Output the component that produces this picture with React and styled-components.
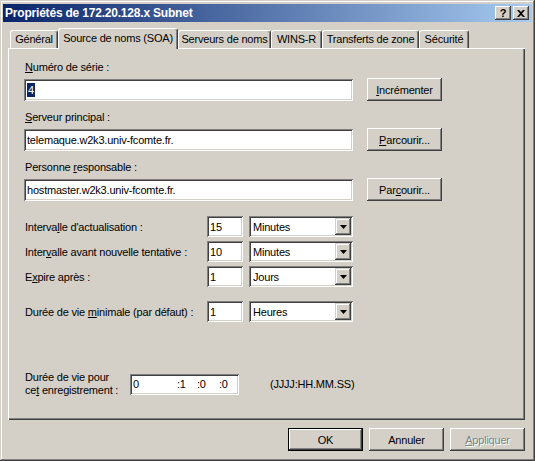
import React from 'react'
import styled, { createGlobalStyle } from 'styled-components'

const face = '#D4D0C8'
const shadow = '#808080'
const dark = '#404040'

const GlobalStyle = createGlobalStyle`
  html, body {
    margin: 0;
    padding: 0;
    background: ${face};
  }
  body {
    font-family: "Liberation Sans", Arial, sans-serif;
    font-size: 11px;
    letter-spacing: -0.2px;
    color: #000;
  }
`

const Window = styled.div`
  width: 535px;
  height: 461px;
  box-sizing: border-box;
  padding: 4px 3px 4px 3px;
  background: ${face};
  box-shadow: inset -1px -1px ${dark}, inset 1px 1px ${face},
    inset -2px -2px ${shadow}, inset 2px 2px #fff;
  display: flex;
  flex-direction: column;
`

const TitleBar = styled.div`
  height: 18px;
  display: flex;
  align-items: center;
  padding: 0 3px 0 2px;
  background: linear-gradient(to right, #0A246A, #A6CAF0);
`

const TitleText = styled.div`
  flex: 1;
  color: #fff;
  font-weight: bold;
  font-size: 12px;
  letter-spacing: -0.2px;
  white-space: nowrap;
`

const CaptionButtons = styled.div`
  display: flex;
  gap: 2px;
`

const CaptionButton = styled.div`
  width: 16px;
  height: 14px;
  box-sizing: border-box;
  background: ${face};
  box-shadow: inset -1px -1px ${dark}, inset 1px 1px #fff,
    inset -2px -2px ${shadow}, inset 2px 2px ${face};
  display: flex;
  align-items: center;
  justify-content: center;
  font-weight: bold;
  font-size: 11px;
  line-height: 14px;
  letter-spacing: 0;
`

const Body = styled.div`
  padding: 6px 7px 0 5px;
  display: flex;
  flex-direction: column;
`

const TabStrip = styled.div`
  height: 20px;
  display: flex;
  align-items: flex-end;
  padding-left: 2px;
`

const Tab = styled.div`
  width: ${p => p.$w}px;
  height: ${p => (p.$active ? 21 : 18)}px;
  margin-bottom: ${p => (p.$active ? -1 : 0)}px;
  box-sizing: border-box;
  position: ${p => (p.$active ? 'relative' : 'static')};
  z-index: ${p => (p.$active ? 1 : 0)};
  background: ${face};
  border: 1px solid;
  border-color: #fff ${dark} transparent #fff;
  border-bottom: none;
  border-radius: 3px 3px 0 0;
  box-shadow: inset -1px 0 ${shadow};
  display: flex;
  justify-content: center;
  padding-top: ${p => (p.$active ? 3 : 2)}px;
  line-height: 13px;
  white-space: nowrap;
`

const Panel = styled.div`
  height: 372px;
  box-sizing: border-box;
  padding: 13px 0 0 16px;
  box-shadow: inset 1px 1px #fff, inset -1px -1px ${dark}, inset -2px -2px ${shadow};
  display: flex;
  flex-direction: column;
`

const FieldGroup = styled.div`
  display: flex;
  flex-direction: column;
  margin-top: ${p => p.$top || 0}px;
`

const FieldLabel = styled.div`
  line-height: 13px;
  padding-left: 1px;
  margin-bottom: 4px;
`

const FieldRow = styled.div`
  display: flex;
  align-items: center;
  gap: 14px;
`

const sunken = `
  box-shadow: inset 1px 1px ${shadow}, inset -1px -1px #fff,
    inset 2px 2px ${dark}, inset -2px -2px ${face};
`

const TextBox = styled.div`
  width: ${p => p.$w}px;
  height: ${p => p.$h || 22}px;
  box-sizing: border-box;
  background: #fff;
  ${sunken}
  display: flex;
  align-items: center;
  padding-left: 3px;
  white-space: nowrap;
`

const Selected = styled.span`
  background: #0A246A;
  color: #fff;
  padding: 0 1px;
  line-height: 14px;
`

const PushButton = styled.div`
  width: 75px;
  height: 23px;
  box-sizing: border-box;
  background: ${face};
  box-shadow: inset -1px -1px ${dark}, inset 1px 1px #fff,
    inset -2px -2px ${shadow}, inset 2px 2px ${face};
  display: flex;
  align-items: center;
  justify-content: center;
  white-space: nowrap;
`

const Key = styled.span`
  text-decoration: underline;
  text-underline-offset: 1px;
`

const IntervalList = styled.div`
  display: flex;
  flex-direction: column;
  gap: 4px;
  margin-top: 15px;
`

const IntervalRow = styled.div`
  display: flex;
  align-items: center;
  margin-top: ${p => p.$top || 0}px;
`

const RowLabel = styled.div`
  width: 183px;
  padding-left: 1px;
  box-sizing: border-box;
  white-space: nowrap;
`

const Combo = styled.div`
  width: 104px;
  height: 21px;
  margin-left: 6px;
  box-sizing: border-box;
  background: #fff;
  ${sunken}
  display: flex;
  align-items: center;
  padding: 0 2px 0 4px;
`

const ComboText = styled.div`
  flex: 1;
`

const ComboArrow = styled.div`
  width: 16px;
  height: 17px;
  box-sizing: border-box;
  background: ${face};
  box-shadow: inset -1px -1px ${dark}, inset 1px 1px ${face},
    inset -2px -2px ${shadow}, inset 2px 2px #fff;
  display: flex;
  align-items: center;
  justify-content: center;
`

const TtlRow = styled.div`
  display: flex;
  align-items: center;
  margin-top: 49px;
`

const TtlLabel = styled.div`
  width: 106px;
  line-height: 13px;
  padding-left: 1px;
  box-sizing: border-box;
`

const TimeBox = styled.div`
  width: 109px;
  height: 21px;
  box-sizing: border-box;
  background: #fff;
  ${sunken}
  position: relative;
`

const TimePart = styled.span`
  position: absolute;
  top: 4px;
  line-height: 13px;
`

const FormatHint = styled.div`
  margin-left: 31px;
`

const ButtonBar = styled.div`
  display: flex;
  justify-content: flex-end;
  gap: 6px;
  margin-top: 8px;
  padding-right: 0;
`

const DialogButton = styled(PushButton)`
  ${p => p.$default && `
    border: 1px solid #000;
    box-shadow: inset -1px -1px ${dark}, inset 1px 1px #fff,
      inset -2px -2px ${shadow}, inset 2px 2px ${face};
  `}
  ${p => p.$disabled && `
    color: ${shadow};
    text-shadow: 1px 1px #fff;
  `}
`

const tabs = [
  { label: 'Général', w: 48 },
  { label: 'Source de noms (SOA)', w: 120, active: true },
  { label: 'Serveurs de noms', w: 93 },
  { label: 'WINS-R', w: 51 },
  { label: 'Transferts de zone', w: 97 },
  { label: 'Sécurité', w: 50 },
]

const Arrow = () => (
  <svg width="7" height="4" viewBox="0 0 7 4">
    <path d="M0 0h7L3.5 4z" fill="#000" />
  </svg>
)

const CloseGlyph = () => (
  <svg width="8" height="7" viewBox="0 0 8 7">
    <path d="M0 0h2l2 2 2-2h2L5 3.5 8 7H6L4 5 2 7H0l3-3.5z" fill="#000" />
  </svg>
)

const Interval = ({ label, value, unit, top }) => (
  <IntervalRow $top={top}>
    <RowLabel>{label}</RowLabel>
    <TextBox $w={36} $h={21}>{value}</TextBox>
    <Combo>
      <ComboText>{unit}</ComboText>
      <ComboArrow><Arrow /></ComboArrow>
    </Combo>
  </IntervalRow>
)

export default function App() {
  return (
    <>
      <GlobalStyle />
      <Window>
        <TitleBar>
          <TitleText>Propriétés de 172.20.128.x Subnet</TitleText>
          <CaptionButtons>
            <CaptionButton>?</CaptionButton>
            <CaptionButton><CloseGlyph /></CaptionButton>
          </CaptionButtons>
        </TitleBar>
        <Body>
          <TabStrip>
            {tabs.map(t => (
              <Tab key={t.label} $w={t.w} $active={t.active}>{t.label}</Tab>
            ))}
          </TabStrip>
          <Panel>
            <FieldGroup>
              <FieldLabel><Key>N</Key>uméro de série :</FieldLabel>
              <FieldRow>
                <TextBox $w={329}><Selected>4</Selected></TextBox>
                <PushButton><Key>I</Key>ncrémenter</PushButton>
              </FieldRow>
            </FieldGroup>
            <FieldGroup $top={10}>
              <FieldLabel><Key>S</Key>erveur principal :</FieldLabel>
              <FieldRow>
                <TextBox $w={329}>telemaque.w2k3.univ-fcomte.fr.</TextBox>
                <PushButton><Key>P</Key>arcourir...</PushButton>
              </FieldRow>
            </FieldGroup>
            <FieldGroup $top={10}>
              <FieldLabel>Personne <Key>r</Key>esponsable :</FieldLabel>
              <FieldRow>
                <TextBox $w={329}>hostmaster.w2k3.univ-fcomte.fr.</TextBox>
                <PushButton>Par<Key>c</Key>ourir...</PushButton>
              </FieldRow>
            </FieldGroup>
            <IntervalList>
              <Interval label={<>Interva<Key>l</Key>le d'actualisation :</>} value="15" unit="Minutes" />
              <Interval label={<>Inter<Key>v</Key>alle avant nouvelle tentative :</>} value="10" unit="Minutes" />
              <Interval label={<>E<Key>x</Key>pire après :</>} value="1" unit="Jours" />
              <Interval label={<>Durée de vie <Key>m</Key>inimale (par défaut) :</>} value="1" unit="Heures" top={10} />
            </IntervalList>
            <TtlRow>
              <TtlLabel>Durée de vie pour<br />ce<Key>t</Key> enregistrement :</TtlLabel>
              <TimeBox>
                <TimePart style={{ left: 3 }}>0</TimePart>
                <TimePart style={{ left: 47 }}>:1</TimePart>
                <TimePart style={{ left: 67 }}>:0</TimePart>
                <TimePart style={{ left: 89 }}>:0</TimePart>
              </TimeBox>
              <FormatHint>(JJJJ:HH.MM.SS)</FormatHint>
            </TtlRow>
          </Panel>
          <ButtonBar>
            <DialogButton $default>OK</DialogButton>
            <DialogButton>Annuler</DialogButton>
            <DialogButton $disabled><Key>A</Key>ppliquer</DialogButton>
          </ButtonBar>
        </Body>
      </Window>
    </>
  )
}
